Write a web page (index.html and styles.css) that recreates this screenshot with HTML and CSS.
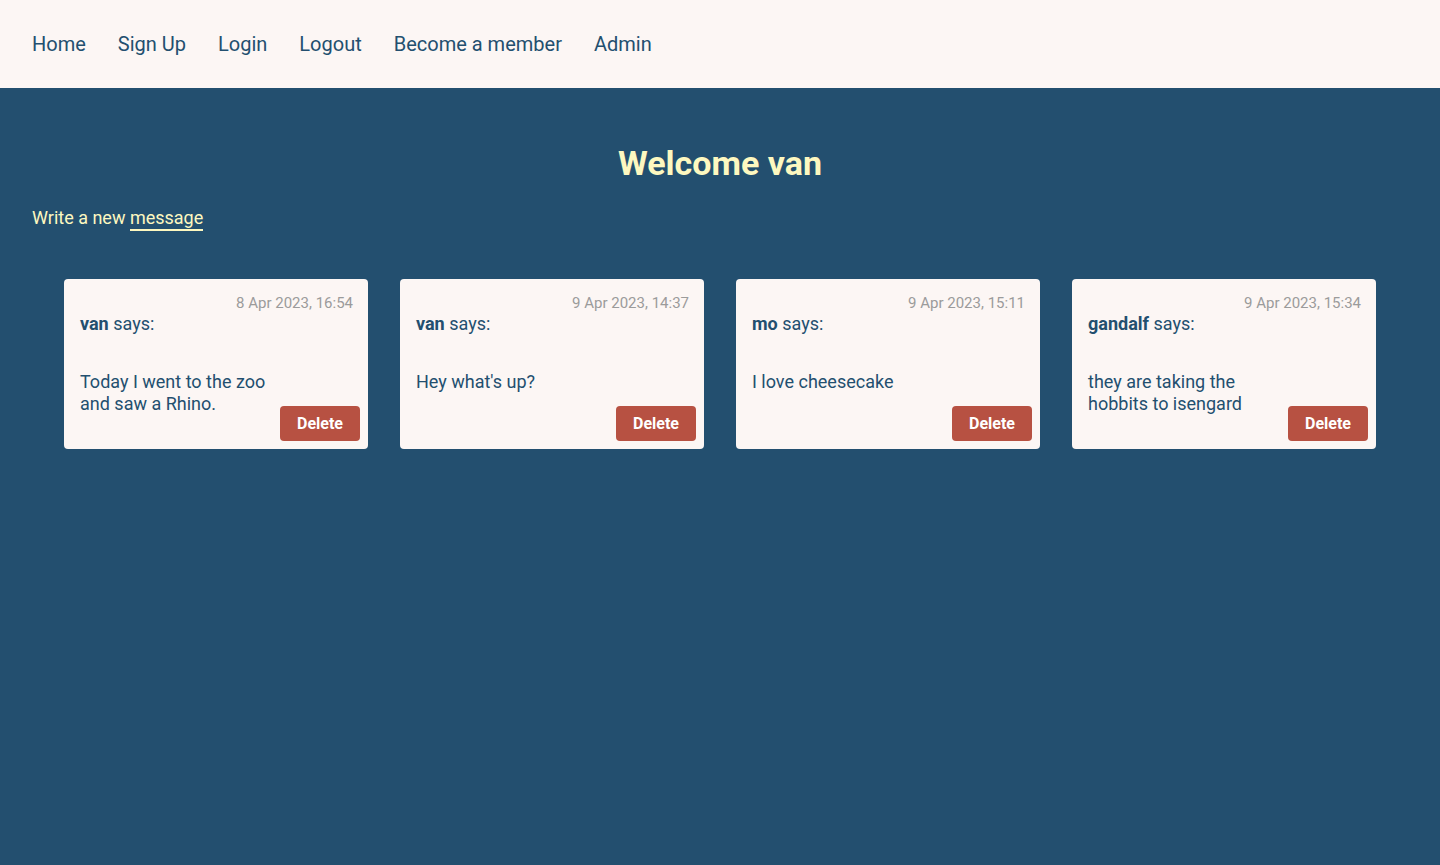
FILE: index.html
```html
<!DOCTYPE html>
<html lang="en">
<head>
<meta charset="utf-8">
<title>Members Only</title>
<link rel="stylesheet" href="styles.css">
</head>
<body>
<header class="site-header">
  <nav class="nav">
    <a href="#">Home</a>
    <a href="#">Sign Up</a>
    <a href="#">Login</a>
    <a href="#">Logout</a>
    <a href="#">Become a member</a>
    <a href="#">Admin</a>
  </nav>
</header>
<main class="main">
  <h1 class="title">Welcome van</h1>
  <p class="write">Write a new <a href="#" class="write-link">message</a></p>
  <section class="cards">
    <article class="card">
      <div class="date">8 Apr 2023, 16:54</div>
      <div class="author"><strong>van</strong> says:</div>
      <div class="row">
        <p class="msg">Today I went to the zoo and saw a Rhino.</p>
        <button class="delete">Delete</button>
      </div>
    </article>
    <article class="card">
      <div class="date">9 Apr 2023, 14:37</div>
      <div class="author"><strong>van</strong> says:</div>
      <div class="row">
        <p class="msg">Hey what's up?</p>
        <button class="delete">Delete</button>
      </div>
    </article>
    <article class="card">
      <div class="date">9 Apr 2023, 15:11</div>
      <div class="author"><strong>mo</strong> says:</div>
      <div class="row">
        <p class="msg">I love cheesecake</p>
        <button class="delete">Delete</button>
      </div>
    </article>
    <article class="card">
      <div class="date">9 Apr 2023, 15:34</div>
      <div class="author"><strong>gandalf</strong> says:</div>
      <div class="row">
        <p class="msg">they are taking the hobbits to isengard</p>
        <button class="delete">Delete</button>
      </div>
    </article>
  </section>
</main>
</body>
</html>
```

FILE: styles.css
```css
* { box-sizing: border-box; }

html, body {
  margin: 0;
  padding: 0;
  height: 100%;
}

body {
  font-family: Roboto, "Liberation Sans", sans-serif;
  background: #234f6f;
  color: #234f6f;
}

.site-header {
  background: #fcf6f4;
  height: 88px;
  display: flex;
  align-items: center;
  padding: 0 32px;
}

.nav {
  display: flex;
  gap: 32px;
}

.nav a {
  color: #234f6f;
  text-decoration: none;
  font-size: 20px;
  line-height: 24px;
}

.main {
  padding: 32px 32px;
}

.title {
  margin: 23px 0 0;
  text-align: center;
  color: #fdf8c0;
  font-size: 34px;
  line-height: 40px;
  font-weight: 700;
}

.write {
  margin: 24px 0 0;
  color: #fdf8c0;
  font-size: 18px;
  line-height: 22px;
}

.write-link {
  color: #fdf8c0;
  text-decoration: none;
  border-bottom: 2px solid #fdf8c0;
  padding-bottom: 1px;
}

.cards {
  display: grid;
  grid-template-columns: repeat(4, 304px);
  gap: 32px;
  justify-content: center;
  margin-top: 50px;
}

.card {
  background: #fcf6f4;
  border-radius: 4px;
  padding: 15px 8px 8px 16px;
  display: flex;
  flex-direction: column;
  height: 170px;
}

.date {
  text-align: right;
  font-size: 15px;
  line-height: 18px;
  color: #9b9b9b;
  padding-right: 7px;
}

.author {
  font-size: 18px;
  line-height: 22px;
  margin-top: 1px;
}

.author strong {
  font-weight: 700;
}

.row {
  display: flex;
  gap: 8px;
  margin-top: 36px;
}

.msg {
  flex: 1;
  margin: 0;
  font-size: 18px;
  line-height: 22px;
}

.delete {
  align-self: flex-start;
  margin-top: 35px;
  width: 80px;
  height: 35px;
  border: none;
  border-radius: 4px;
  background: #b75142;
  color: #ffffff;
  font-family: Roboto, "Liberation Sans", sans-serif;
  font-weight: 700;
  font-size: 16px;
  cursor: pointer;
}
```
